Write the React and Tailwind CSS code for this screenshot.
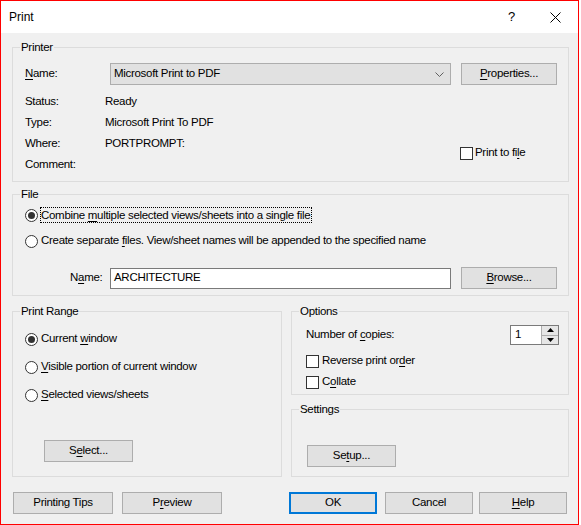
import React from 'react';

const font = { fontFamily: '"Liberation Sans", Arial, sans-serif' };

const Btn = ({ w, className = '', children }) => (
  <div className={`h-[22px] ${w} border border-[#adadad] bg-[#e1e1e1] flex items-center justify-center ${className}`}>
    {children}
  </div>
);

const U = ({ children }) => <span className="underline underline-offset-[2px]">{children}</span>;

const Radio = ({ checked }) => (
  <div className="w-[13px] h-[13px] rounded-full border border-[#333333] bg-white flex items-center justify-center shrink-0">
    {checked && <div className="w-[7px] h-[7px] rounded-full bg-[#333333]" />}
  </div>
);

const Check = () => <div className="w-[13px] h-[13px] border border-[#333333] bg-white shrink-0" />;

const Group = ({ label, className = '', children }) => (
  <fieldset className={`border border-[#dcdcdc] ${className}`}>
    <legend className="ml-[7px] px-[1px] leading-[14px]">{label}</legend>
    {children}
  </fieldset>
);

export default function App() {
  return (
    <div className="w-[581px] h-[525px] bg-white text-[11.5px] tracking-[-0.3px] text-black" style={font}>
      <div className="w-[579px] h-[525px] border border-[#ff0000] bg-[#f0f0f0] flex flex-col">
        {/* title bar */}
        <div className="h-[32px] bg-white flex items-center relative">
          <span className="ml-[8px] text-[12px] tracking-normal">Print</span>
          <span className="ml-auto mr-[35px] text-[13px]">?</span>
          <svg width="11" height="11" viewBox="0 0 11 11" className="mr-[17px]">
            <path d="M0.5 0.5 L10.5 10.5 M10.5 0.5 L0.5 10.5" stroke="#000" strokeWidth="1" />
          </svg>
        </div>

        <div className="pl-[11px] flex flex-col">
          {/* Printer */}
          <Group label="Printer" className="mt-[7px] w-[557px]">
            <div className="pt-[9px] pl-[12px] pb-[6px]">
              <div className="flex items-center h-[22px]">
                <span className="w-[85px]"><U>N</U>ame:</span>
                <div className="w-[341px] h-[22px] border border-[#adadad] bg-[#e1e1e1] flex items-center pl-[3px] pr-[6px]">
                  <span>Microsoft Print to PDF</span>
                  <svg width="9" height="5" viewBox="0 0 9 5" className="ml-auto">
                    <path d="M0.5 0.5 L4.5 4.5 L8.5 0.5" stroke="#606060" fill="none" strokeWidth="1" />
                  </svg>
                </div>
                <Btn w="w-[96px]" className="ml-[10px]"><span><U>P</U>roperties...</span></Btn>
              </div>
              <div className="flex mt-[6px]">
                <div className="w-[435px]">
                  {[
                    ['Status:', 'Ready'],
                    ['Type:', 'Microsoft Print To PDF'],
                    ['Where:', 'PORTPROMPT:'],
                    ['Comment:', ''],
                  ].map(([k, v]) => (
                    <div key={k} className="flex h-[21px] items-center">
                      <span className="w-[80px]">{k}</span>
                      <span>{v}</span>
                    </div>
                  ))}
                </div>
                <div className="mt-[55px] h-[14px] flex items-center gap-[2px]">
                  <Check />
                  <span>Print to fi<U>l</U>e</span>
                </div>
              </div>
            </div>
          </Group>

          {/* File */}
          <Group label="File" className="mt-[5px] w-[557px]">
            <div className="pt-[6px] pl-[12px] pb-[6px]">
              <div className="flex items-center h-[16px] gap-[2px]">
                <Radio checked />
                <span className="border border-dotted border-black h-[16px] leading-[14px] pr-[1px]">
                  Combine <U>m</U>ultiple selected views/sheets into a single file
                </span>
              </div>
              <div className="flex items-center h-[16px] gap-[3px] mt-[10px]">
                <Radio />
                <span>Create separate <U>f</U>iles. View/sheet names will be appended to the specified name</span>
              </div>
              <div className="flex items-center h-[22px] mt-[18px]">
                <span className="ml-[45px] w-[40px]">N<U>a</U>me:</span>
                <div className="w-[341px] h-[21px] border border-[#7a7a7a] bg-white flex items-center pl-[3px]">
                  ARCHITECTURE
                </div>
                <Btn w="w-[96px]" className="ml-[10px]"><span><U>B</U>rowse...</span></Btn>
              </div>
            </div>
          </Group>

          {/* lower */}
          <div className="flex mt-[8px] gap-[9px]">
            <Group label="Print Range" className="w-[270px] h-[173px]">
              <div className="pt-[13px] pl-[12px]">
                <div className="flex items-center h-[16px] gap-[3px]">
                  <Radio checked />
                  <span>Current <U>w</U>indow</span>
                </div>
                <div className="flex items-center h-[16px] gap-[3px] mt-[12px]">
                  <Radio />
                  <span><U>V</U>isible portion of current window</span>
                </div>
                <div className="flex items-center h-[16px] gap-[3px] mt-[12px]">
                  <Radio />
                  <span><U>S</U>elected views/sheets</span>
                </div>
                <Btn w="w-[89px]" className="mt-[37px] ml-[19px]"><span>S<U>e</U>lect...</span></Btn>
              </div>
            </Group>

            <div className="flex flex-col">
              <Group label="Options" className="w-[278px]">
                <div className="pt-[7px] pl-[14px] pr-[9px] pb-[5px]">
                  <div className="flex items-center justify-between h-[20px]">
                    <span>Number of <U>c</U>opies:</span>
                    <div className="w-[49px] h-[20px] border border-[#7a7a7a] bg-white flex">
                      <div className="flex-1 flex items-center pl-[4px]">1</div>
                      <div className="w-[17px] flex flex-col bg-[#e6e6e6] border-l border-[#adadad]">
                        <div className="flex-1 flex items-center justify-center border-b border-[#adadad]">
                          <svg width="7" height="4" viewBox="0 0 7 4"><path d="M0 4 L3.5 0 L7 4 Z" fill="#000" /></svg>
                        </div>
                        <div className="flex-1 flex items-center justify-center">
                          <svg width="7" height="4" viewBox="0 0 7 4"><path d="M0 0 L3.5 4 L7 0 Z" fill="#000" /></svg>
                        </div>
                      </div>
                    </div>
                  </div>
                  <div className="flex items-center h-[14px] gap-[3px] mt-[9px]">
                    <Check />
                    <span>Reverse print or<U>d</U>er</span>
                  </div>
                  <div className="flex items-center h-[14px] gap-[3px] mt-[7px]">
                    <Check />
                    <span>C<U>o</U>llate</span>
                  </div>
                </div>
              </Group>
              <Group label="Settings" className="w-[278px] h-[75px] mt-[7px]">
                <div className="pt-[29px] pl-[15px]">
                  <Btn w="w-[89px]"><span>Se<U>t</U>up...</span></Btn>
                </div>
              </Group>
            </div>
          </div>

          {/* bottom buttons */}
          <div className="flex mt-[15px] items-center">
            <Btn w="w-[100px]" className="ml-[1px]">Printing Tips</Btn>
            <Btn w="w-[100px]" className="ml-[9px]"><span>P<U>r</U>eview</span></Btn>
            <div className="ml-[67px] w-[88px] h-[22px] border-2 border-[#0078d7] bg-[#e1e1e1] flex items-center justify-center">OK</div>
            <Btn w="w-[88px]" className="ml-[8px]">Cancel</Btn>
            <Btn w="w-[88px]" className="ml-[6px]"><span><U>H</U>elp</span></Btn>
          </div>
        </div>
      </div>
    </div>
  );
}
